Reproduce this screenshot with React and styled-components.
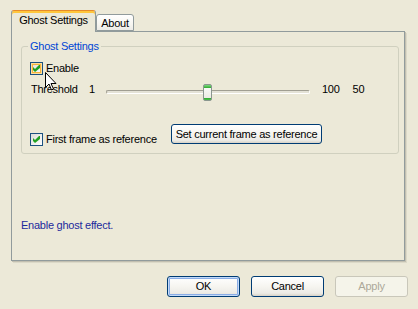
import React from 'react'
import styled, { createGlobalStyle } from 'styled-components'

const GlobalStyle = createGlobalStyle`
    html, body {
        margin: 0;
        padding: 0;
        background: #ECE9D8;
    }
    body {
        font-family: "Liberation Sans", Arial, sans-serif;
        font-size: 11px;
        line-height: 13px;
        letter-spacing: -0.25px;
        color: #000;
    }
    * { box-sizing: border-box; }
`

const Dialog = styled.div`
    position: relative;
    width: 418px;
    height: 309px;
    padding: 10px 10px 0 11px;
    background: #ECE9D8;
    display: flex;
    flex-direction: column;
`
const TabStrip = styled.div`
    display: flex;
    align-items: flex-end;
    height: 21px;
`
const Tab = styled.div`
    position: relative;
    z-index: 1;
    width: ${p => p.$w}px;
    height: ${p => p.$active ? 22 : 17}px;
    margin-bottom: ${p => p.$active ? -1 : 0}px;
    padding-top: ${p => p.$active ? 3 : 2}px;
    text-align: center;
    border: 1px solid #919B9C;
    border-bottom: ${p => p.$active ? 'none' : '1px solid #919B9C'};
    border-top-color: ${p => p.$active ? '#E68B2C' : '#919B9C'};
    border-radius: 3px 3px 0 0;
    background: ${p => p.$active
        ? '#ECE9D8'
        : 'linear-gradient(to bottom, #FFFFFF 0%, #F7F6F1 60%, #ECEBE6 100%)'};
    box-shadow: ${p => p.$active ? 'inset 0 2px 0 #FFC73C' : 'none'};
`
const Panel = styled.div`
    width: 394px;
    height: 230px;
    border: 1px solid #919B9C;
    box-shadow: 1px 1px 0 #C2BFB0, 2px 2px 0 #DCD9C8;
    background: #ECE9D8;
    padding: 8px 5px 28px 9px;
    display: flex;
    flex-direction: column;
`
const Group = styled.fieldset`
    margin: 0;
    min-width: 0;
    padding: 0 8px 7px 8px;
    border: 1px solid #D0D0BF;
    border-radius: 3px;
`
const Legend = styled.legend`
    padding: 0 2px;
    margin-left: -2px;
    line-height: 13px;
    color: #0046D5;
`
const Row = styled.div`
    display: flex;
    align-items: ${p => p.$align || 'center'};
    margin-top: ${p => p.$top || 0}px;
`
const CheckLabel = styled.label`
    display: flex;
    align-items: center;
    gap: 3px;
    width: ${p => p.$w ? `${p.$w}px` : 'auto'};
    margin-top: ${p => p.$top || 0}px;
`
const Box = styled.span`
    flex: none;
    width: 13px;
    height: 13px;
    border: 1px solid #1C5180;
    background: linear-gradient(135deg, #DCDCD7 0%, #FFFFFF 100%);
    box-shadow: ${p => p.$hot ? 'inset 0 0 0 1px #FEDF9C, inset 0 0 0 2px #F8B33A' : 'none'};
    display: flex;
    align-items: center;
    justify-content: center;
`
const Label = styled.span`
    width: ${p => p.$w ? `${p.$w}px` : 'auto'};
    margin-left: ${p => p.$left || 0}px;
    flex: none;
`
const Slider = styled.div`
    position: relative;
    width: 204px;
    height: 17px;
    flex: none;
`
const Track = styled.div`
    margin-top: 7px;
    height: 4px;
    border-radius: 2px;
    border-top: 1px solid #A09E92;
    border-left: 1px solid #A09E92;
    border-bottom: 1px solid #FFFFFF;
    border-right: 1px solid #FFFFFF;
    background: #E4E2D6;
`
const Thumb = styled.div`
    position: absolute;
    top: 1px;
    width: 9px;
    height: 17px;
    border: 1px solid #8A968F;
    border-radius: 2px;
    background: linear-gradient(to bottom,
        #7DDB7D 0, #2FA82F 3px,
        #F9F9F6 3px, #ECEBE4 13px,
        #2FA82F 13px, #4CC14C 100%);
`
const Status = styled.div`
    margin-top: auto;
    color: #1C2A9C;
`
const ButtonRow = styled.div`
    display: flex;
    justify-content: flex-end;
    gap: 11px;
    margin-top: 15px;
`
const Button = styled.button`
    width: ${p => p.$w || 73}px;
    height: ${p => p.$h || 21}px;
    flex: none;
    padding: 0;
    font: inherit;
    letter-spacing: inherit;
    color: #000;
    border: 1px solid #003C74;
    border-radius: 3px;
    background: linear-gradient(to bottom, #FFFFFF 0%, #F6F5F0 50%, #ECEBE6 85%, #D8D2C6 100%);
    box-shadow: ${p => p.$default ? 'inset 0 0 0 1px #C4DAF8, inset 0 0 0 2px #8AADE6' : 'none'};
    &:disabled {
        color: #ACA899;
        border-color: #C9C7BA;
        background: #F5F4EA;
        box-shadow: none;
    }
`
const Cursor = styled.svg`
    position: absolute;
    left: 45px;
    top: 72px;
    z-index: 2;
`

const CheckMark = () => (
    <svg width="7" height="7" viewBox="0 0 7 7">
        <polygon points="0,2 2,4 6,0 7,0 7,3 2,7 0,5" fill="#21A121" />
    </svg>
)

const Check = ({ hot, children, width, top }) => (
    <CheckLabel $w={width} $top={top}>
        <Box $hot={hot}><CheckMark /></Box>
        <span>{children}</span>
    </CheckLabel>
)

const threshold = { min: 1, max: 100, value: 50 }

const App = () => {
    const { min, max, value } = threshold
    const thumbLeft = Math.round((value - min) / (max - min) * (204 - 9))
    return (
        <Dialog>
            <GlobalStyle />
            <TabStrip>
                <Tab $active $w={85}>Ghost Settings</Tab>
                <Tab $w={38}>About</Tab>
            </TabStrip>
            <Panel>
                <Group>
                    <Legend>Ghost Settings</Legend>
                    <Row $top={9}>
                        <Check hot>Enable</Check>
                    </Row>
                    <Row $top={8} $align="flex-start">
                        <Label $w={58} $left={1}>Threshold</Label>
                        <Label $w={17}>{min}</Label>
                        <Slider>
                            <Track />
                            <Thumb style={{ left: thumbLeft }} />
                        </Slider>
                        <Label $left={12}>{max}</Label>
                        <Label $left={13}>{value}</Label>
                    </Row>
                    <Row $top={24} $align="flex-start">
                        <Check width={141} top={9}>First frame as reference</Check>
                        <Button $w={151} $h={20}>Set current frame as reference</Button>
                    </Row>
                </Group>
                <Status>Enable ghost effect.</Status>
            </Panel>
            <ButtonRow>
                <Button $default>OK</Button>
                <Button>Cancel</Button>
                <Button disabled>Apply</Button>
            </ButtonRow>
            <Cursor width="12" height="19" viewBox="0 0 12 19">
                <polygon points="0.5,0.5 0.5,15.5 4,12 6.5,18 8.5,17 6,11.5 11,11.5"
                    fill="#FFFFFF" stroke="#000000" strokeWidth="1" />
            </Cursor>
        </Dialog>
    )
}

export default App
